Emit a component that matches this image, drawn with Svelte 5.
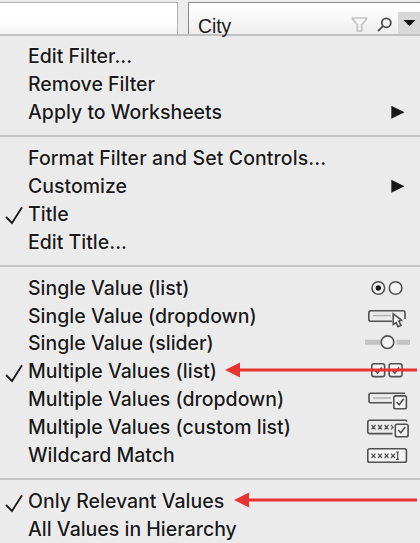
<script>
  const groups = [
    {
      cls: 'edit',
      items: [
        { label: 'Edit Filter...' },
        { label: 'Remove Filter' },
        { label: 'Apply to Worksheets', icon: 'sub' }
      ]
    },
    {
      cls: 'format',
      items: [
        { label: 'Format Filter and Set Controls...', wide: true },
        { label: 'Customize', icon: 'sub' },
        { label: 'Title', checked: true },
        { label: 'Edit Title...' }
      ]
    },
    {
      cls: 'modes',
      items: [
        { label: 'Single Value (list)', icon: 'radios' },
        { label: 'Single Value (dropdown)', icon: 'dropdown' },
        { label: 'Single Value (slider)', icon: 'slider' },
        { label: 'Multiple Values (list)', icon: 'checks', checked: true, arrow: 225 },
        { label: 'Multiple Values (dropdown)', icon: 'multidrop' },
        { label: 'Multiple Values (custom list)', icon: 'custom' },
        { label: 'Wildcard Match', icon: 'wildcard' }
      ]
    },
    {
      cls: 'scope',
      items: [
        { label: 'Only Relevant Values', checked: true, arrow: 234 },
        { label: 'All Values in Hierarchy' }
      ]
    }
  ];
</script>

<div class="screen">
  <header>
    <div class="field"></div>
    <div class="card">
      <span class="name">City</span>
      <svg class="funnel" width="18" height="18" viewBox="0 0 18 18"><path d="M1.6 2H15.4V3.3L10.7 8.8V15H6.3V8.8L1.6 3.3Z" /></svg>
      <svg class="lens" width="18" height="18" viewBox="0 0 18 18"><circle cx="10.3" cy="6.8" r="4.5" /><path d="M7 10.2L2 15" /></svg>
      <span class="toggle"><svg width="13" height="8" viewBox="0 0 13 8"><path d="M.5 1H12.5L6.5 7.2Z" /></svg></span>
    </div>
  </header>

  <div class="menu">
    {#each groups as g}
      <section class={g.cls}>
        {#each g.items as item}
          <div class="row">
            <span class="tick">
              {#if item.checked}
                <svg width="20" height="20" viewBox="0 0 20 20"><path d="M2 12L8 18L18 2.2" /></svg>
              {/if}
            </span>
            <span class="label" class:wide={item.wide}>{item.label}</span>
            {#if item.icon}
              <svg class="icon" width="48" height="28" viewBox="0 0 48 28">
                {#if item.icon === 'sub'}
                  <path class="solid" d="M24.3 7.8L37.5 14.3L24.3 20.7Z" />
                {:else if item.icon === 'radios'}
                  <circle cx="11.3" cy="14" r="6.3" /><circle class="solid" cx="11.3" cy="14" r="2.7" />
                  <circle cx="28.6" cy="14" r="6.3" />
                {:else if item.icon === 'dropdown'}
                  <path d="M25 19.2H3.2Q1.8 19.2 1.8 17.6V11.2Q1.8 8.8 4 8.8H36Q38 8.8 38 11V17" />
                  <path class="light" d="M6 13.6H24" />
                  <path class="hand" d="M26.2 11.8L34.5 18.1L31.8 19.1L34 23.4L31 24.6L29.2 20.6L26.2 22.4Z" />
                {:else if item.icon === 'slider'}
                  <path class="track" d="M-2 13.2H13.5M29.5 13.2H43" />
                  <circle cx="20.5" cy="13.2" r="6.3" />
                {:else if item.icon === 'checks'}
                  <rect x="4.8" y="6.8" width="12.8" height="12.8" rx="2" /><path d="M8 13.5L10.5 16L14.7 10.5" />
                  <rect x="22.2" y="6.8" width="12.8" height="12.8" rx="2" /><path d="M25.4 13.5L27.9 16L32.1 10.5" />
                {:else if item.icon === 'multidrop'}
                  <path d="M25 17.8H3.4Q2 17.8 2 16.3V9.8Q2 8.3 3.5 8.3H38" />
                  <path class="light" d="M6 13H24" />
                  <rect x="26.8" y="10.9" width="12.6" height="12.8" rx="1.8" /><path d="M29.7 17L32.2 19.7L36.7 13.7" />
                {:else if item.icon === 'custom'}
                  <path d="M25.5 20.6H2.5Q.8 20.6 .8 19V9Q.8 7.3 2.5 7.3H38Q39.8 7.3 40 8.5" />
                  <path class="fine" d="M4.5 12L8.5 16.4M8.5 12L4.5 16.4M11 12L15 16.4M15 12L11 16.4M17.5 12L21.5 16.4M21.5 12L17.5 16.4M24 12L26 14.2L24 16.4" />
                  <rect x="28.3" y="11.2" width="12.8" height="12.6" rx="1.8" /><path d="M31.3 17L33.8 19.7L38.3 14" />
                {:else if item.icon === 'wildcard'}
                  <rect x=".8" y="7.7" width="38.6" height="13.6" rx="1.8" />
                  <path class="fine" d="M4.5 12.6L8.5 17M8.5 12.6L4.5 17M11 12.6L15 17M15 12.6L11 17M17.5 12.6L21.5 17M21.5 12.6L17.5 17M24 12.6L28 17M28 12.6L24 17M30.7 11V18.4M29 11H32M29 18.4H32" />
                {/if}
              </svg>
            {/if}
            {#if item.arrow}
              <svg class="pointer" style:left="{item.arrow}px" style:width="{416.5 - item.arrow}px" height="16">
                <path d="M15 8H400" /><polygon points="0,8 15,.5 15,15.5" />
              </svg>
            {/if}
          </div>
        {/each}
      </section>
    {/each}
  </div>
</div>

<style>
  .screen {
    width: 420px;
    height: 543px;
    overflow: hidden;
    display: flex;
    flex-direction: column;
    background: #ebebeb;
    color: #191919;
    font-family: Inter, 'Liberation Sans', sans-serif;
  }
  header {
    height: 37px;
    box-sizing: border-box;
    padding-top: 2px;
    border-bottom: 2px solid #c1c1c1;
    display: flex;
    gap: 10px;
    background: #ececec;
  }
  .field {
    width: 178px;
    box-sizing: border-box;
    border: solid #b2b2b2;
    border-width: 1px 1px 0 0;
    background: linear-gradient(#fff 60%, #f4f4f4);
  }
  .card {
    flex: 1;
    box-sizing: border-box;
    border: solid #888;
    border-width: 1px 0 0 1px;
    padding-left: 9px;
    display: flex;
    align-items: flex-end;
    background: linear-gradient(#fff 10%, #eee);
  }
  .name {
    width: 153px;
    flex: none;
    font: 19.3px/24px 'Liberation Sans', sans-serif;
    margin-bottom: -5px;
  }
  header svg { fill: none; flex: none; }
  .funnel { stroke: #c2c2c2; stroke-width: 1.7; }
  .lens { margin-left: 7px; stroke: #4b4b4b; stroke-width: 1.8; }
  .toggle {
    margin-left: auto;
    width: 22px;
    height: 22px;
    background: #d8d8d8;
    display: flex;
    align-items: center;
    justify-content: center;
  }
  .toggle svg { fill: #111; }
  section { border-bottom: 2px solid #c5c5c5; --row: 28px; }
  .edit { padding: 6px 0 9px; }
  .format { padding: 7px 0 9px; }
  .modes { padding: 7.5px 0 9.5px; --row: 27.79px; }
  .scope { padding: 7px 0 0; border: 0; }
  .row {
    position: relative;
    display: flex;
    align-items: center;
    height: var(--row);
  }
  .tick { width: 28px; height: 20px; box-sizing: border-box; padding-left: 4px; margin-top: 3px; }
  .tick svg { display: block; fill: none; stroke: #191919; stroke-width: 1.8; }
  .label {
    width: 339px;
    font-size: 19.5px;
    line-height: 28px;
    font-weight: 450;
    white-space: nowrap;
    text-shadow: 0 0 2px #fff, 0 0 1px #fff;
  }
  .wide { letter-spacing: .09px; }
  .icon { fill: none; stroke: #505050; stroke-width: 1.6; overflow: visible; }
  .icon .solid { fill: #191919; stroke: none; }
  .icon .light { stroke: #b5b5b5; stroke-width: 1.5; }
  .icon .track { stroke: #c2c2c2; stroke-width: 5; }
  .icon .fine { stroke-width: 1.2; }
  .icon rect, .icon circle, .icon .hand { fill: #f4f4f4; }
  .icon circle.solid { fill: #191919; }
  .pointer { position: absolute; top: 5px; overflow: hidden; }
  .pointer path { stroke: #e73331; stroke-width: 3; }
  .pointer polygon { fill: #e73331; }
</style>
